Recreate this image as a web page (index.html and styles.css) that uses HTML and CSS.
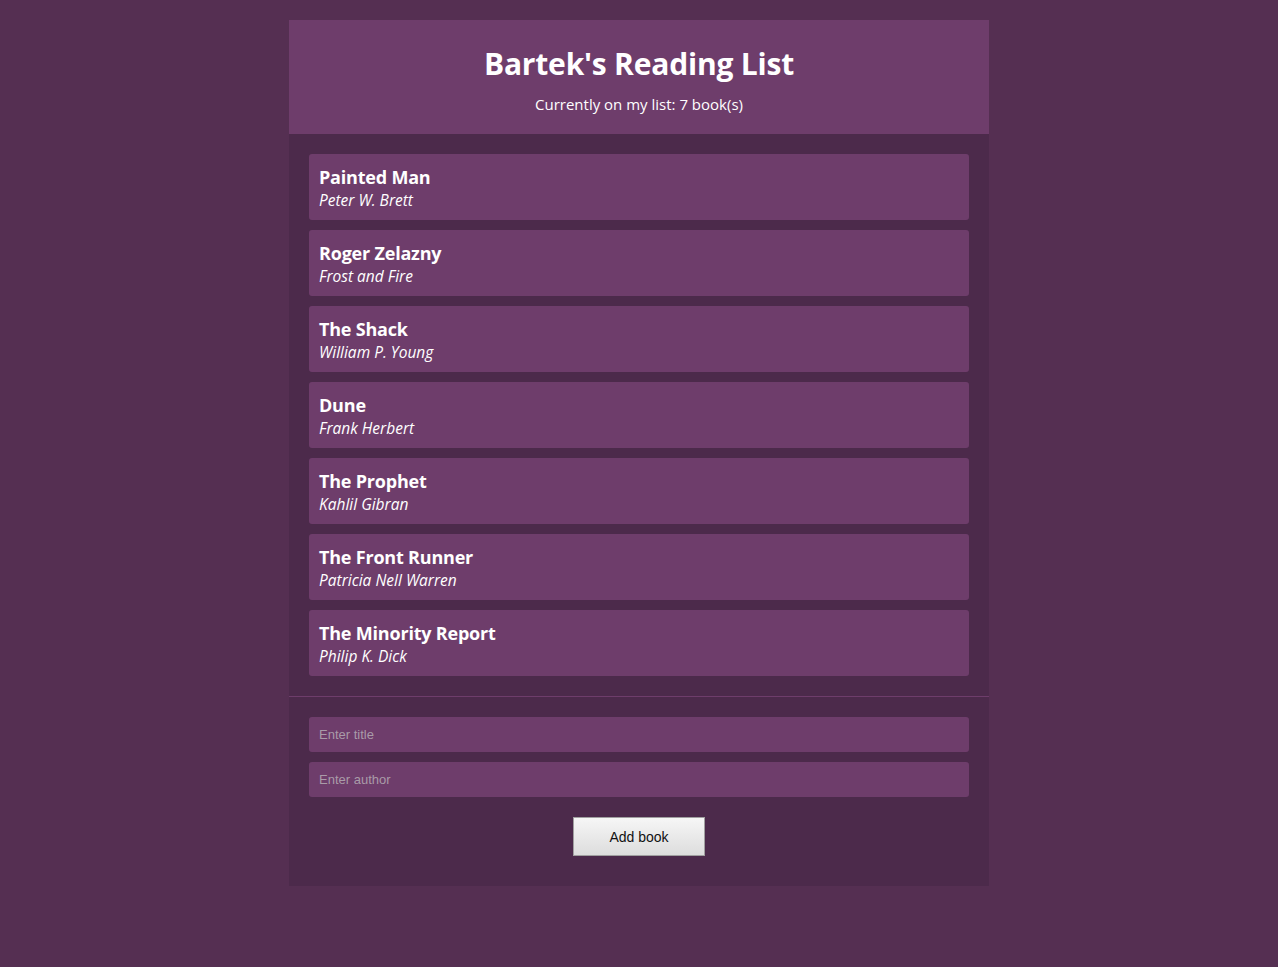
FILE: index.html
```html
<!DOCTYPE html>
<html>
<head>
<meta charset="utf-8">
<link rel="stylesheet" href="styles.css">
</head>
<body>
<div class="app">
  <header class="header">
    <h1 class="title">Bartek's Reading List</h1>
    <p class="count">Currently on my list: 7 book(s)</p>
  </header>
  <ul class="books">
    <li class="book"><span class="book-title">Painted Man</span><span class="book-author">Peter W. Brett</span></li>
    <li class="book"><span class="book-title">Roger Zelazny</span><span class="book-author">Frost and Fire</span></li>
    <li class="book"><span class="book-title">The Shack</span><span class="book-author">William P. Young</span></li>
    <li class="book"><span class="book-title">Dune</span><span class="book-author">Frank Herbert</span></li>
    <li class="book"><span class="book-title">The Prophet</span><span class="book-author">Kahlil Gibran</span></li>
    <li class="book"><span class="book-title">The Front Runner</span><span class="book-author">Patricia Nell Warren</span></li>
    <li class="book"><span class="book-title">The Minority Report</span><span class="book-author">Philip K. Dick</span></li>
  </ul>
  <form class="form">
    <input class="field" type="text" placeholder="Enter title">
    <input class="field" type="text" placeholder="Enter author">
    <button class="add" type="button">Add book</button>
  </form>
</div>
</body>
</html>
```

FILE: styles.css
```css
html, body {
  margin: 0;
  padding: 0;
}
body {
  background: #552f52;
  font-family: "Open Sans", "Noto Sans", sans-serif;
  color: #ffffff;
  min-height: 967px;
}
.app {
  width: 700px;
  margin: 20px auto 0;
  background: #4c2a4b;
}
.header {
  background: #6e3d6b;
  text-align: center;
  padding: 26px 0 20px;
}
.title {
  margin: 0;
  font-size: 30px;
  font-weight: 700;
  line-height: 36px;
  letter-spacing: -0.2px;
}
.count {
  margin: 12px 0 0;
  font-size: 15px;
  line-height: 20px;
}
.books {
  list-style: none;
  margin: 0;
  padding: 20px;
  display: flex;
  flex-direction: column;
  gap: 10px;
  border-bottom: 1px solid #6e3d6b;
}
.book {
  background: #6e3d6b;
  border-radius: 3px;
  height: 66px;
  box-sizing: border-box;
  padding: 12px 10px;
  display: flex;
  flex-direction: column;
}
.book-title {
  font-size: 18px;
  font-weight: 700;
  line-height: 23px;
  letter-spacing: -0.2px;
}
.book-author {
  font-size: 15.5px;
  font-style: italic;
  line-height: 22px;
}
.form {
  padding: 20px 20px 30px;
  display: flex;
  flex-direction: column;
  gap: 10px;
}
.field {
  height: 35px;
  box-sizing: border-box;
  border: none;
  border-radius: 3px;
  background: #6e3d6b;
  padding: 0 10px;
  font-family: "Liberation Sans", Arial, sans-serif;
  font-size: 13px;
  color: #ffffff;
}
.field::placeholder {
  color: #a99ba8;
}
.add {
  align-self: center;
  margin-top: 10px;
  width: 132px;
  height: 39px;
  border: 1px solid #a0a0a0;
  border-radius: 0;
  background: linear-gradient(#f6f6f6, #dddddd);
  font-family: "Liberation Sans", Arial, sans-serif;
  font-size: 14px;
  color: #111111;
}
```
